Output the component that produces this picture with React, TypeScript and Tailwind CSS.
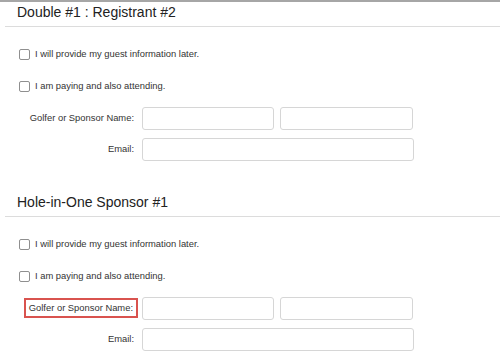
import React from 'react'

function Check({ label }: { label: string }) {
  return (
    <div className='flex items-center h-[16px]'>
      <span className='w-[11px] h-[11px] border border-[#8f8f8f] rounded-[2px] bg-white'></span>
      <span className='ml-[5px] text-[9.4px] leading-[16px] text-[#333]'>{label}</span>
    </div>
  )
}

function Section({ title, highlight }: { title: string; highlight?: boolean }) {
  return (
    <div className='flex flex-col h-[190px]'>
      <div className='ml-[5px] pl-[12px] pt-[2px] h-[25px] border-b border-[#dcdcdc]'>
        <p className='text-[14px] leading-[16px] text-[#222]'>{title}</p>
      </div>
      <div className='flex flex-col pl-[19px] mt-[19px] gap-[16px]'>
        <Check label='I will provide my guest information later.' />
        <Check label='I am paying and also attending.' />
      </div>
      <div className='flex flex-col mt-[13px] gap-[8px] text-[9.4px] text-[#333]'>
        <div className='flex items-center'>
          <div className='w-[134px] text-right'>
            {highlight ? (
              <span className='inline-block px-[1px] leading-[12px] outline-2 outline-[#d9534f] outline-offset-[2px]'>Golfer or Sponsor Name:</span>
            ) : (
              <span>Golfer or Sponsor Name:</span>
            )}
          </div>
          <input className='ml-[8px] w-[132px] h-[23px] border border-[#d6d6d6] rounded-[3px]' />
          <input className='ml-[6px] w-[133px] h-[23px] border border-[#d6d6d6] rounded-[3px]' />
        </div>
        <div className='flex items-center'>
          <div className='w-[134px] text-right'>Email:</div>
          <input className='ml-[8px] w-[272px] h-[23px] border border-[#d6d6d6] rounded-[3px]' />
        </div>
      </div>
    </div>
  )
}

export default function App() {
  return (
    <div className='w-[500px] h-[360px] bg-white border-t-2 border-[#a6a6a6] overflow-hidden' style={{ fontFamily: '"Liberation Sans", Arial, sans-serif' }}>
      <Section title='Double #1 : Registrant #2' />
      <Section title='Hole-in-One Sponsor #1' highlight />
    </div>
  )
}
